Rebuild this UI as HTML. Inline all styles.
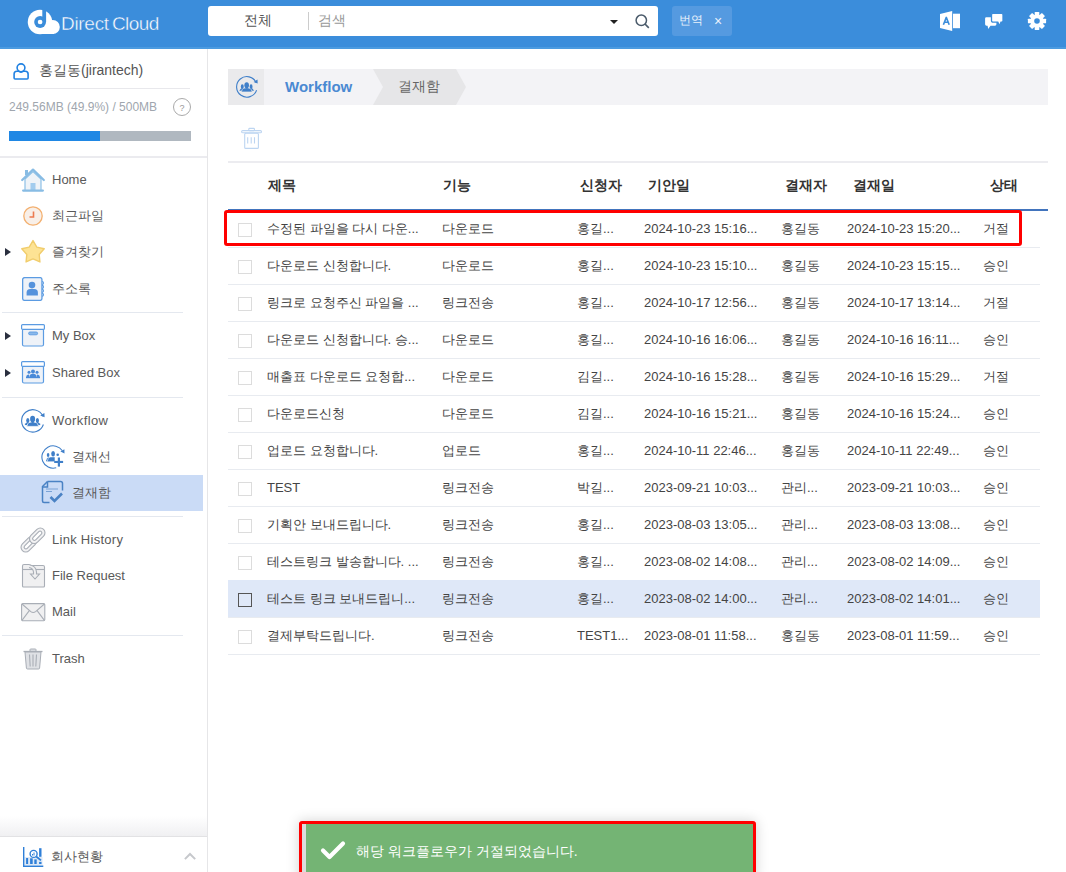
<!DOCTYPE html>
<html><head><meta charset="utf-8">
<style>
*{box-sizing:border-box}
html,body{margin:0;padding:0}
body{width:1066px;height:872px;overflow:hidden;position:relative;background:#fff;font-family:"Liberation Sans",sans-serif;color:#444}
.abs{position:absolute}
#hdr{left:0;top:0;width:1066px;height:47px;background:#3b8ddb}
#hdrline{left:0;top:47px;width:1066px;height:2px;background:#4c9be0}
#search{left:208px;top:6px;width:450px;height:30px;background:#fff;border-radius:3px}
.t{position:absolute;white-space:nowrap;line-height:16px}
#side{left:0;top:49px;width:208px;height:823px;background:#fff;border-right:1px solid #e6e6e8}
.mi{font-size:13px;color:#595959}
.div{position:absolute;left:2px;width:181px;height:1px;background:#e4e8ef}
.tri{position:absolute;width:0;height:0;border-top:4px solid transparent;border-bottom:4px solid transparent;border-left:6px solid #2a2f3f}
.row{position:absolute;left:228px;width:812px;height:37px;border-bottom:1px solid #e8ebf0}
.cb{position:absolute;left:10px;top:12px;width:14px;height:14px;border:1px solid #dcdcdc;background:#fff}
.c{position:absolute;top:10px;font-size:13px;color:#444;white-space:nowrap;line-height:16px}
.th{position:absolute;top:177px;font-size:14px;font-weight:bold;color:#333;white-space:nowrap;line-height:16px}
</style></head><body>

<!-- HEADER -->
<div id="hdr" class="abs"></div>
<div id="hdrline" class="abs"></div>
<svg class="abs" style="left:24px;top:6px" width="40" height="32" viewBox="0 0 40 32">
  <g fill="#fff"><circle cx="16" cy="16" r="12.25"/><circle cx="28.8" cy="21" r="7"/><rect x="16" y="18" width="14" height="10"/></g>
  <circle cx="16.1" cy="16" r="5.9" fill="#3b8ddb"/>
  <rect x="18.3" y="0" width="3.8" height="16" fill="#3b8ddb"/>
  <circle cx="16.1" cy="16" r="2.35" fill="#fff"/>
</svg>
<div class="t" style="left:61px;top:13px;font-size:19px;line-height:22px;color:#fff;letter-spacing:-0.3px;-webkit-text-stroke:0.4px #3b8ddb">Direct</div><div class="t" style="left:112px;top:13px;font-size:19px;line-height:22px;color:#fff;letter-spacing:-0.6px;-webkit-text-stroke:0.4px #3b8ddb">Cloud</div>
<div id="search" class="abs">
  <div class="t" style="left:36px;top:6px;font-size:14px;color:#555">전체</div>
  <div class="abs" style="left:100px;top:6px;width:1px;height:18px;background:#ccc"></div>
  <div class="t" style="left:110px;top:6px;font-size:14px;color:#999">검색</div>
  <div class="abs" style="left:402px;top:14px;width:0;height:0;border-left:4px solid transparent;border-right:4px solid transparent;border-top:4px solid #222"></div>
  <svg class="abs" style="left:427px;top:8px" width="15" height="15" viewBox="0 0 15 15"><circle cx="6.3" cy="6.3" r="5.2" fill="none" stroke="#4a5a6a" stroke-width="1.5"/><path d="M10 10 L13.8 13.8" stroke="#4a5a6a" stroke-width="1.7"/></svg>
</div>
<div class="abs" style="left:672px;top:6px;width:60px;height:30px;background:#559ae0;border-radius:3px"></div>
<div class="t" style="left:679px;top:12px;font-size:12px;color:#e8f1fb">번역</div>
<div class="t" style="left:714px;top:13px;font-size:14px;color:#e8f1fb">×</div>

<!-- header right icons -->
<svg class="abs" style="left:939px;top:10px" width="22" height="22" viewBox="0 0 22 22">
  <path d="M1 3.9 L13.2 1 L13.2 20.9 L1 18 Z" fill="#fff"/>
  <rect x="14" y="3.7" width="7" height="14.5" fill="#fff"/>
  <path d="M4.4 14.7 L7.3 7.4 L10.2 14.7 M5.5 12.2 L9.1 12.2" fill="none" stroke="#3b8ddb" stroke-width="1.6" stroke-linejoin="round"/>
</svg>
<svg class="abs" style="left:984px;top:12px" width="20" height="18" viewBox="0 0 20 18">
  <path d="M2.3 5.2 L11 5.2 Q12.4 5.2 12.4 6.6 L12.4 12.3 Q12.4 13.7 11 13.7 L6.5 13.7 L4.2 17.1 L3.6 13.7 L2.5 13.7 Q1.1 13.7 1.1 12.3 L1.1 6.6 Q1.1 5.2 2.3 5.2 Z" fill="#fff"/>
  <path d="M9 1.3 L17.6 1.3 Q19 1.3 19 2.7 L19 8.7 Q19 10.1 17.6 10.1 L17 10.1 L15.6 13.7 L13.8 10.1 L9 10.1 Q7.5 10.1 7.5 8.7 L7.5 2.7 Q7.5 1.3 9 1.3 Z" fill="#fff" stroke="#3b8ddb" stroke-width="1.3"/>
</svg>
<svg class="abs" style="left:1027px;top:11px" width="20" height="20" viewBox="0 0 20 20">
  <g fill="#fff">
   <circle cx="10" cy="10" r="6.6"/>
   <g id="teeth"><rect x="7.7" y="0.9" width="4.6" height="4" rx="0.6"/><rect x="7.7" y="15.1" width="4.6" height="4" rx="0.6"/><rect x="0.9" y="7.7" width="4" height="4.6" rx="0.6"/><rect x="15.1" y="7.7" width="4" height="4.6" rx="0.6"/></g>
   <g transform="rotate(45 10 10)"><rect x="7.7" y="0.9" width="4.6" height="4" rx="0.6"/><rect x="7.7" y="15.1" width="4.6" height="4" rx="0.6"/><rect x="0.9" y="7.7" width="4" height="4.6" rx="0.6"/><rect x="15.1" y="7.7" width="4" height="4.6" rx="0.6"/></g>
  </g>
  <circle cx="10" cy="10" r="2.8" fill="#3b8ddb"/>
</svg>

<!-- SIDEBAR -->
<div id="side" class="abs"></div>
<!-- user -->
<svg class="abs" style="left:12px;top:62px" width="18" height="19" viewBox="0 0 18 19">
  <circle cx="9" cy="5.8" r="3.9" fill="none" stroke="#2282e2" stroke-width="1.6"/>
  <path d="M2.1 16 L2.1 12 Q2.1 9.2 4.8 9.2 L6.3 9.2 Q9 11 11.7 9.2 L13.3 9.2 Q16.1 9.2 16.1 12 L16.1 16 Q16.1 17 15.1 17 L3.1 17 Q2.1 17 2.1 16 Z" fill="none" stroke="#2282e2" stroke-width="1.6" stroke-linejoin="round"/>
</svg>
<div class="t" style="left:39px;top:62px;font-size:14px;line-height:17px;color:#555">홍길동(jirantech)</div>
<div class="abs" style="left:10px;top:88px;width:180px;height:1px;background:#e8e8ec"></div>
<div class="t" style="left:9px;top:99px;font-size:12px;color:#a0a6ae">249.56MB (49.9%) / 500MB</div>
<div class="abs" style="left:173px;top:98px;width:18px;height:18px;border:1px solid #aaa;border-radius:50%;font-size:9px;color:#999;text-align:center;line-height:18px">?</div>
<div class="abs" style="left:9px;top:131px;width:182px;height:10px;background:#b0b8c0"></div>
<div class="abs" style="left:9px;top:131px;width:91px;height:10px;background:#1f87e4"></div>
<div class="abs" style="left:0;top:156px;width:207px;height:2px;background:#ebebef"></div>

<!-- menu: Home -->
<svg class="abs" style="left:21px;top:168px" width="24" height="24" viewBox="0 0 24 24">
  <path d="M4 11 L4 22.5 L20 22.5 L20 11 L12 3.5 Z" fill="#eef3f8" stroke="#8ec0e6" stroke-width="1.2"/>
  <path d="M1.2 12 L12 1.6 L22.8 12" fill="none" stroke="#88bce4" stroke-width="2.2" stroke-linecap="round" stroke-linejoin="round"/>
  <rect x="4" y="2" width="3" height="5" fill="#88bce4"/>
  <rect x="9.5" y="15" width="5" height="8" fill="#a2ccee"/>
  <rect x="1" y="21.5" width="22" height="2.2" rx="1.1" fill="#88bce4"/>
</svg>
<div class="t mi" style="left:52px;top:172px">Home</div>

<svg class="abs" style="left:23px;top:206px" width="20" height="20" viewBox="0 0 20 20">
  <circle cx="10" cy="10" r="9.2" fill="#f8efe8" stroke="#f3b070" stroke-width="1.3"/>
  <path d="M10.5 5.5 L10.5 11 L6.5 11" fill="none" stroke="#ec7a50" stroke-width="1.6"/>
</svg>
<div class="t mi" style="left:52px;top:208px">최근파일</div>

<div class="tri" style="left:5px;top:248px"></div>
<svg class="abs" style="left:20px;top:239px" width="26" height="25" viewBox="0 0 26 25">
  <path d="M13.00 1.60 L16.82 8.14 L24.22 9.75 L19.18 15.41 L19.94 22.95 L13.00 19.90 L6.06 22.95 L6.82 15.41 L1.78 9.75 L9.18 8.14 Z" fill="#fde394" stroke="#f1cd6c" stroke-width="1.4" stroke-linejoin="round"/>
</svg>
<div class="t mi" style="left:52px;top:244px">즐겨찾기</div>

<svg class="abs" style="left:22px;top:277px" width="23" height="24" viewBox="0 0 23 24">
  <rect x="0.65" y="0.6" width="19.3" height="22.8" rx="2" fill="#eef2f8" stroke="#5b9be2" stroke-width="1.3"/>
  <path d="M20 4.5 a1.5 1.5 0 0 1 0 3 M20 8.4 a1.5 1.5 0 0 1 0 3 M20 12.3 a1.5 1.5 0 0 1 0 3 M20 16.2 a1.5 1.5 0 0 1 0 3" fill="none" stroke="#5b9be2" stroke-width="1.1"/>
  <circle cx="10" cy="8.1" r="3.3" fill="#5592dc"/>
  <path d="M4.6 18.4 L4.6 15.6 Q4.6 12 8.2 12 L12.3 12 Q15.9 12 15.9 15.6 L15.9 18.4 Z" fill="#5592dc"/>
</svg>
<div class="t mi" style="left:52px;top:281px">주소록</div>

<div class="div" style="top:312px"></div>

<div class="tri" style="left:5px;top:332px"></div>
<svg class="abs" style="left:21px;top:324px" width="24" height="23" viewBox="0 0 24 23">
  <rect x="1.5" y="5" width="21" height="17" rx="1.5" fill="#eef2f8" stroke="#5b9be2" stroke-width="1.2"/>
  <rect x="0.6" y="0.6" width="22.8" height="4.8" rx="1" fill="#fff" stroke="#5b9be2" stroke-width="1.2"/>
  <rect x="7.6" y="8" width="9" height="2.8" rx="1.4" fill="#8ab8ea" stroke="#5b9be2" stroke-width="0.9"/>
</svg>
<div class="t mi" style="left:52px;top:328px">My Box</div>

<div class="tri" style="left:5px;top:369px"></div>
<svg class="abs" style="left:21px;top:361px" width="24" height="23" viewBox="0 0 24 23">
  <rect x="1.5" y="5" width="21" height="17" rx="1.5" fill="#eef2f8" stroke="#5b9be2" stroke-width="1.2"/>
  <rect x="0.6" y="0.6" width="22.8" height="4.8" rx="1" fill="#fff" stroke="#5b9be2" stroke-width="1.2"/>
  <g fill="#4a8ad8">
  <circle cx="12" cy="10.5" r="2"/><path d="M8.5 16 Q8.5 12.8 12 12.8 Q15.5 12.8 15.5 16 Z"/>
  <circle cx="8" cy="11.3" r="1.5"/><path d="M5.2 16 Q5.2 13.5 8 13.5 L8.5 16 Z"/>
  <circle cx="16" cy="11.3" r="1.5"/><path d="M18.8 16 Q18.8 13.5 16 13.5 L15.5 16 Z"/>
  <rect x="5" y="16" width="14" height="1.2"/>
  </g>
</svg>
<div class="t mi" style="left:52px;top:365px">Shared Box</div>

<div class="div" style="top:397px"></div>

<svg class="abs" style="left:21px;top:409px" width="25" height="24" viewBox="0 0 25 24">
  <path d="M22 7.2 A11.2 11.2 0 1 0 22.4 15.5" fill="none" stroke="#3f7fc9" stroke-width="1.1"/>
  <path d="M19.2 6.6 L23.6 8.2 L23.4 3.9 Z" fill="#3f7fc9"/>
  <g fill="#3f7fc9">
   <ellipse cx="6.8" cy="11.6" rx="1.6" ry="2.6"/><path d="M3.6 16 L4.8 14.2 Q5.4 13.4 6.6 13.4 L8.6 13.4 L7 16.2 Z"/>
   <ellipse cx="16.4" cy="11.6" rx="1.6" ry="2.6"/><path d="M19.6 16 L18.4 14.2 Q17.8 13.4 16.6 13.4 L14.6 13.4 L16.2 16.2 Z"/>
   <path d="M5.7 17.4 L6.8 14.8 Q7.5 13.3 9.5 13.2 L13.7 13.2 Q15.7 13.3 16.5 14.8 L17.7 17.4 Z" stroke="#ffffff" stroke-width="0.7"/>
   <ellipse cx="11.6" cy="10" rx="2.5" ry="3.3"/><rect x="10.4" y="12" width="2.4" height="2"/>
  </g>
</svg>
<div class="t mi" style="left:52px;top:413px;letter-spacing:0.4px">Workflow</div>

<svg class="abs" style="left:41px;top:445px" width="24" height="24" viewBox="0 0 24 24">
  <path d="M15.2 22.8 A11.2 11.2 0 1 1 21.4 5.8" fill="none" stroke="#3f7fc9" stroke-width="1.1"/>
  <path d="M19.4 6.4 L23.5 8.4 L23.4 4.3 Z" fill="#3f7fc9"/>
  <g fill="#3f7fc9">
   <ellipse cx="7.1" cy="10" rx="1.3" ry="2"/><path d="M4.9 16.2 L6 13.4 Q6.5 12.6 7.6 12.6 L8.6 12.6 L7.4 16.4 Z"/>
   <path d="M6.1 16.8 L7.2 13.6 Q7.8 12.1 9.6 11.9 L14 11.9 L14 16.8 Z" stroke="#fff" stroke-width="0.6"/>
   <ellipse cx="12.1" cy="8.7" rx="1.9" ry="2.7"/>
   <circle cx="16.7" cy="9.7" r="1.3"/>
   <rect x="16.8" y="12.5" width="2.2" height="9.1"/><rect x="13.2" y="15.9" width="8.9" height="2.1"/>
  </g>
</svg>
<div class="t mi" style="left:72px;top:449px">결재선</div>

<div class="abs" style="left:0;top:475px;width:203px;height:36px;background:#cadbf6"></div>
<svg class="abs" style="left:41px;top:480px" width="23" height="24" viewBox="0 0 23 24">
  <path d="M6.5 1.5 L19.5 1.5 Q21.5 1.5 21.5 3.5 L21.5 10.5" fill="none" stroke="#4a82c4" stroke-width="1.5"/>
  <path d="M6.5 1.5 L1.5 6.5 L1.5 21 Q1.5 22.5 3 22.5 L8.5 22.5" fill="none" stroke="#4a82c4" stroke-width="1.5"/>
  <path d="M6.5 1.5 L6.5 7 L1.5 7" fill="none" stroke="#4a82c4" stroke-width="1.5"/>
  <path d="M5 9 L17 9 M5 11.5 L11 11.5" stroke="#7aa3d6" stroke-width="1"/>
  <path d="M9.5 17 L13.5 21 L21 13.5" fill="none" stroke="#4a82c4" stroke-width="2.6"/>
</svg>
<div class="t mi" style="left:72px;top:485px">결재함</div>

<div class="div" style="top:516px"></div>

<svg class="abs" style="left:20px;top:527px" width="26" height="26" viewBox="0 0 26 26">
  <g transform="rotate(-45 13 13)" stroke="#a9aeb6" stroke-width="1.1">
   <rect x="-2" y="8.3" width="18" height="9.4" rx="4.7" fill="#f2f2f3"/>
   <rect x="1.2" y="11.2" width="11.6" height="3.6" rx="1.8" fill="#fff"/>
   <rect x="10" y="8.3" width="18" height="9.4" rx="4.7" fill="#f2f2f3"/>
   <rect x="13.2" y="11.2" width="11.6" height="3.6" rx="1.8" fill="#fff"/>
  </g>
</svg>
<div class="t mi" style="left:52px;top:532px;letter-spacing:0.27px">Link History</div>

<svg class="abs" style="left:21px;top:563px" width="25" height="25" viewBox="0 0 25 25">
  <path d="M1.5 3 Q1.5 1.5 3 1.5 L8 1.5 Q9.5 1.5 9.5 2.5 L22 2.5 Q23.5 2.5 23.5 4 L23.5 23 Q23.5 24 22.5 24 L2.5 24 Q1.5 24 1.5 23 Z" fill="#f0f0f1" stroke="#a9aeb6" stroke-width="1.1"/>
  <path d="M1.5 6.5 L23.5 6.5" stroke="#a9aeb6" stroke-width="1.1"/>
  <path d="M9 2 Q15 3 15.5 9 L15.5 11 L18.5 11 L14 16 L9.5 11 L12.5 11 L12.5 9 Q12 5 8 4.5" fill="#f0f0f1" stroke="#a9aeb6" stroke-width="1.1"/>
</svg>
<div class="t mi" style="left:52px;top:568px">File Request</div>

<svg class="abs" style="left:21px;top:603px" width="25" height="19" viewBox="0 0 25 19">
  <rect x="0.6" y="0.6" width="23.2" height="17.2" rx="1.2" fill="#f0f0f1" stroke="#a9aeb6" stroke-width="1.1"/>
  <path d="M1 1 L9.8 8.6 Q12.2 10.3 14.6 8.6 L23.4 1 M1 17.4 L8.3 7.6 M23.4 17.4 L16.1 7.6" fill="none" stroke="#a9aeb6" stroke-width="1.1"/>
</svg>
<div class="t mi" style="left:52px;top:604px">Mail</div>

<div class="div" style="top:635px"></div>

<svg class="abs" style="left:23px;top:648px" width="20" height="23" viewBox="0 0 20 23">
  <path d="M7 3 L7 1.5 Q7 1 8 1 L12 1 Q13 1 13 1.5 L13 3" fill="#dfe1e5" stroke="#a9aeb6" stroke-width="1"/>
  <path d="M0.5 3.5 L19.5 3.5" stroke="#a9aeb6" stroke-width="1.3"/>
  <path d="M2 4 L3.4 20 Q3.5 21 4.5 21 L15.5 21 Q16.5 21 16.6 20 L18 4 Z" fill="#dfe1e5" stroke="#a9aeb6" stroke-width="1"/>
  <path d="M6.5 6.5 L7.2 18.5 M10 6.5 L10 18.5 M13.5 6.5 L12.8 18.5" stroke="#a9aeb6" stroke-width="1.1"/>
</svg>
<div class="t mi" style="left:52px;top:651px">Trash</div>

<!-- bottom bar -->
<div class="abs" style="left:0;top:816px;width:207px;height:20px;background:linear-gradient(to bottom,rgba(240,240,242,0),rgba(240,240,242,1))"></div>
<div class="abs" style="left:0;top:836px;width:207px;height:1px;background:#e2e2e4"></div>
<svg class="abs" style="left:23px;top:847px" width="21" height="21" viewBox="0 0 21 21">
  <rect x="1.5" y="10" width="18" height="8" fill="#dde9f7"/>
  <path d="M0.7 0 L0.7 19.3 L20.3 19.3" fill="none" stroke="#2f7fd8" stroke-width="1.4"/>
  <g fill="#2f7fd8"><rect x="3.1" y="11" width="2" height="6"/><rect x="7.1" y="11.3" width="2.6" height="5.7"/><rect x="11.3" y="12.4" width="2.4" height="4.6"/><rect x="16.1" y="1.2" width="2.4" height="8.6"/><rect x="16.1" y="14.9" width="2.4" height="2.1"/></g>
  <circle cx="10.6" cy="6.9" r="3.5" fill="#fff" stroke="#2f7fd8" stroke-width="1.4"/>
  <path d="M9.5 8.5 L9.5 7 M11 8.5 L11 5.5" stroke="#2f7fd8" stroke-width="1"/>
  <path d="M13.2 9.5 L18 13.4" stroke="#2f7fd8" stroke-width="1.8"/>
</svg>
<div class="t mi" style="left:51px;top:849px">회사현황</div>
<svg class="abs" style="left:183px;top:852px" width="14" height="9" viewBox="0 0 14 9"><path d="M1.9 7.1 L7 2 L12.2 7.1" fill="none" stroke="#c6c8cc" stroke-width="2"/></svg>

<!-- MAIN -->
<div class="abs" style="left:228px;top:69px;width:820px;height:36px;background:#f3f3f6"></div>
<div class="abs" style="left:228px;top:69px;width:36px;height:36px;background:#eaeaec"></div>
<svg class="abs" style="left:236px;top:76px" width="23" height="22" viewBox="0 0 25 24">
  <path d="M22 7.2 A11.2 11.2 0 1 0 22.4 15.5" fill="none" stroke="#3f7fc9" stroke-width="1.2"/>
  <path d="M19.2 6.6 L23.6 8.2 L23.4 3.9 Z" fill="#3f7fc9"/>
  <g fill="#3f7fc9">
   <ellipse cx="6.8" cy="11.6" rx="1.6" ry="2.6"/><path d="M3.6 16 L4.8 14.2 Q5.4 13.4 6.6 13.4 L8.6 13.4 L7 16.2 Z"/>
   <ellipse cx="16.4" cy="11.6" rx="1.6" ry="2.6"/><path d="M19.6 16 L18.4 14.2 Q17.8 13.4 16.6 13.4 L14.6 13.4 L16.2 16.2 Z"/>
   <path d="M5.7 17.4 L6.8 14.8 Q7.5 13.3 9.5 13.2 L13.7 13.2 Q15.7 13.3 16.5 14.8 L17.7 17.4 Z" stroke="#eaeaec" stroke-width="0.7"/>
   <ellipse cx="11.6" cy="10" rx="2.5" ry="3.3"/><rect x="10.4" y="12" width="2.4" height="2"/>
  </g>
</svg>
<div class="t" style="left:285px;top:79px;font-size:15px;font-weight:bold;color:#4a89d2">Workflow</div>
<svg class="abs" style="left:373px;top:69px" width="93" height="36" viewBox="0 0 93 36">
  <path d="M0 0 L83 0 L93 18 L83 36 L0 36 L10 18 Z" fill="#e6e6e8"/>
</svg>
<div class="t" style="left:398px;top:78px;font-size:14px;color:#666">결재함</div>

<svg class="abs" style="left:240px;top:127px" width="23" height="23" viewBox="0 0 23 23">
  <g fill="none" stroke="#bdd5f1" stroke-width="1.1">
  <rect x="8.8" y="1.4" width="5.6" height="2.2" rx="0.6"/>
  <rect x="1.6" y="3.6" width="19.9" height="2.2" rx="1.1"/>
  <rect x="4.7" y="6.2" width="13.7" height="15.2" rx="1"/>
  <path d="M7.7 10.3 L7.7 16.6 M11.2 10.3 L11.2 16.6 M14.5 10.3 L14.5 16.6"/>
  </g>
</svg>
<div class="abs" style="left:228px;top:161px;width:820px;height:2px;background:#ececf0"></div>

<!-- table header -->
<div class="th" style="left:268px">제목</div>
<div class="th" style="left:443px">기능</div>
<div class="th" style="left:580px">신청자</div>
<div class="th" style="left:648px">기안일</div>
<div class="th" style="left:785px">결재자</div>
<div class="th" style="left:853px">결재일</div>
<div class="th" style="left:990px">상태</div>
<div class="abs" style="left:228px;top:209px;width:820px;height:2px;background:#4274bd"></div>

<!-- rows -->
<div id="rows"></div>
<div class="row" style="top:211px;"><div class="cb" style=""></div><div class="c" style="left:39px">수정된 파일을 다시 다운...</div><div class="c" style="left:214px">다운로드</div><div class="c" style="left:349px">홍길...</div><div class="c" style="left:416px">2024-10-23 15:16...</div><div class="c" style="left:553px">홍길동</div><div class="c" style="left:619px">2024-10-23 15:20...</div><div class="c" style="left:755px">거절</div></div>
<div class="row" style="top:248px;"><div class="cb" style=""></div><div class="c" style="left:39px">다운로드 신청합니다.</div><div class="c" style="left:214px">다운로드</div><div class="c" style="left:349px">홍길...</div><div class="c" style="left:416px">2024-10-23 15:10...</div><div class="c" style="left:553px">홍길동</div><div class="c" style="left:619px">2024-10-23 15:15...</div><div class="c" style="left:755px">승인</div></div>
<div class="row" style="top:285px;"><div class="cb" style=""></div><div class="c" style="left:39px">링크로 요청주신 파일을 ...</div><div class="c" style="left:214px">링크전송</div><div class="c" style="left:349px">홍길...</div><div class="c" style="left:416px">2024-10-17 12:56...</div><div class="c" style="left:553px">홍길동</div><div class="c" style="left:619px">2024-10-17 13:14...</div><div class="c" style="left:755px">거절</div></div>
<div class="row" style="top:322px;"><div class="cb" style=""></div><div class="c" style="left:39px">다운로드 신청합니다. 승...</div><div class="c" style="left:214px">다운로드</div><div class="c" style="left:349px">홍길...</div><div class="c" style="left:416px">2024-10-16 16:06...</div><div class="c" style="left:553px">홍길동</div><div class="c" style="left:619px">2024-10-16 16:11...</div><div class="c" style="left:755px">승인</div></div>
<div class="row" style="top:359px;"><div class="cb" style=""></div><div class="c" style="left:39px">매출표 다운로드 요청합...</div><div class="c" style="left:214px">다운로드</div><div class="c" style="left:349px">김길...</div><div class="c" style="left:416px">2024-10-16 15:28...</div><div class="c" style="left:553px">홍길동</div><div class="c" style="left:619px">2024-10-16 15:29...</div><div class="c" style="left:755px">거절</div></div>
<div class="row" style="top:396px;"><div class="cb" style=""></div><div class="c" style="left:39px">다운로드신청</div><div class="c" style="left:214px">다운로드</div><div class="c" style="left:349px">김길...</div><div class="c" style="left:416px">2024-10-16 15:21...</div><div class="c" style="left:553px">홍길동</div><div class="c" style="left:619px">2024-10-16 15:24...</div><div class="c" style="left:755px">승인</div></div>
<div class="row" style="top:433px;"><div class="cb" style=""></div><div class="c" style="left:39px">업로드 요청합니다.</div><div class="c" style="left:214px">업로드</div><div class="c" style="left:349px">홍길...</div><div class="c" style="left:416px">2024-10-11 22:46...</div><div class="c" style="left:553px">홍길동</div><div class="c" style="left:619px">2024-10-11 22:49...</div><div class="c" style="left:755px">승인</div></div>
<div class="row" style="top:470px;"><div class="cb" style=""></div><div class="c" style="left:39px">TEST</div><div class="c" style="left:214px">링크전송</div><div class="c" style="left:349px">박길...</div><div class="c" style="left:416px">2023-09-21 10:03...</div><div class="c" style="left:553px">관리...</div><div class="c" style="left:619px">2023-09-21 10:03...</div><div class="c" style="left:755px">승인</div></div>
<div class="row" style="top:507px;"><div class="cb" style=""></div><div class="c" style="left:39px">기획안 보내드립니다.</div><div class="c" style="left:214px">링크전송</div><div class="c" style="left:349px">홍길...</div><div class="c" style="left:416px">2023-08-03 13:05...</div><div class="c" style="left:553px">관리...</div><div class="c" style="left:619px">2023-08-03 13:08...</div><div class="c" style="left:755px">승인</div></div>
<div class="row" style="top:544px;"><div class="cb" style=""></div><div class="c" style="left:39px">테스트링크 발송합니다. ...</div><div class="c" style="left:214px">링크전송</div><div class="c" style="left:349px">홍길...</div><div class="c" style="left:416px">2023-08-02 14:08...</div><div class="c" style="left:553px">관리...</div><div class="c" style="left:619px">2023-08-02 14:09...</div><div class="c" style="left:755px">승인</div></div>
<div class="row" style="top:581px;background:#dfe8f8;box-shadow:0 -1px 0 #dfe8f8;"><div class="cb" style="border-color:#555;background:transparent;"></div><div class="c" style="left:39px">테스트 링크 보내드립니...</div><div class="c" style="left:214px">링크전송</div><div class="c" style="left:349px">홍길...</div><div class="c" style="left:416px">2023-08-02 14:00...</div><div class="c" style="left:553px">관리...</div><div class="c" style="left:619px">2023-08-02 14:01...</div><div class="c" style="left:755px">승인</div></div>
<div class="row" style="top:618px;"><div class="cb" style=""></div><div class="c" style="left:39px">결제부탁드립니다.</div><div class="c" style="left:214px">링크전송</div><div class="c" style="left:349px">TEST1...</div><div class="c" style="left:416px">2023-08-01 11:58...</div><div class="c" style="left:553px">홍길동</div><div class="c" style="left:619px">2023-08-01 11:59...</div><div class="c" style="left:755px">승인</div></div>

<!-- red box -->
<div class="abs" style="left:224px;top:210px;width:798px;height:36px;border:3px solid #ff0000;border-radius:3px"></div>

<!-- toast -->
<div class="abs" style="left:299px;top:821px;width:457px;height:60px;box-shadow:0 0 12px rgba(0,0,0,0.18)"></div>
<div class="abs" style="left:302px;top:824px;width:451px;height:60px;background:#74b474;border-left:4px solid #dcdcdc"></div>
<svg class="abs" style="left:320px;top:840px" width="26" height="20" viewBox="0 0 26 20"><path d="M3 10.5 L9.5 17 L23 3.5" fill="none" stroke="#fff" stroke-width="4.2" stroke-linecap="round" stroke-linejoin="round"/></svg>
<div class="t" style="left:356px;top:843px;font-size:14px;color:#fff">해당 워크플로우가 거절되었습니다.</div>
<div class="abs" style="left:299px;top:821px;width:457px;height:60px;border:3px solid #ff0000;border-radius:3px"></div>

</body></html>
